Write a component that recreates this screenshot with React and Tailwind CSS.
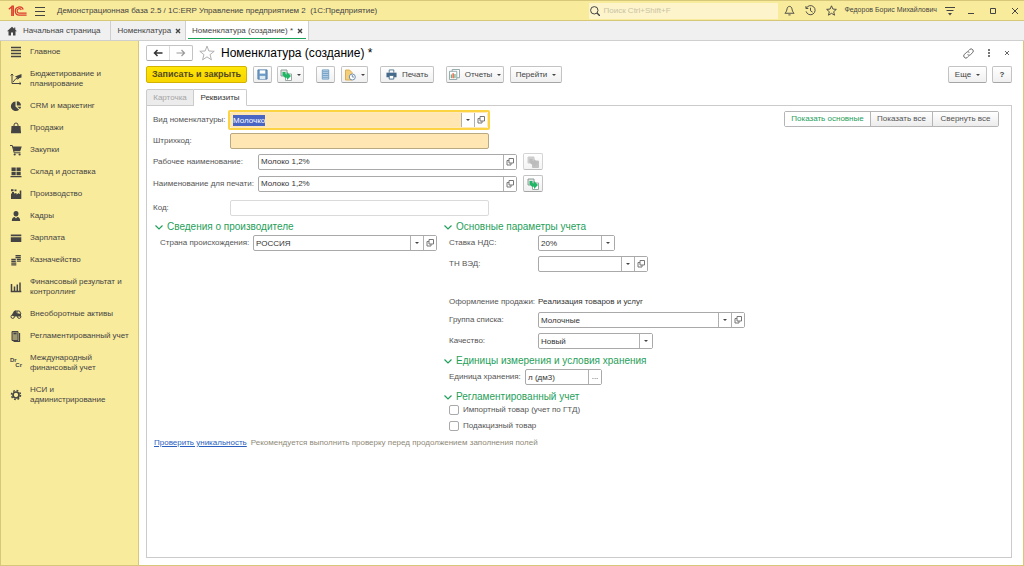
import React, { useEffect, useRef } from 'react';

const Svg = ({ className = 'w-3 h-3', children, box = '0 0 12 12' }) => (
  <svg viewBox={box} className={`shrink-0 ${className}`} fill="none" stroke="currentColor" strokeWidth="1" aria-hidden="true">
    {children}
  </svg>
);

const LogoIcon = () => (
  <Svg box="0 0 19 12" className="w-[19px] h-3 text-[#dc3a2c]">
    <path d="M.8 4.200 3.800 1.700V11M5.300 11V1.200H3.500" strokeWidth="1.300" />
    <path d="M15.200 4.600A4.100 4.100 0 1 0 11.200 10.200H18.600" strokeWidth="1.300" />
    <path d="M13.300 5A2.200 2.200 0 1 0 11.400 8.100H18.600" strokeWidth="1.200" />
  </Svg>
);

const Caret = () => (
  <svg viewBox="0 0 4 2" className="w-1 h-[2px] shrink-0" fill="#444" aria-hidden="true">
    <path d="M0 0h4L2 2z" />
  </svg>
);

const OpenIcon = () => (
  <Svg className="w-2 h-2 text-[#777]" box="0 0 8 8">
    <path d="M3 .5h4.500v4.500H3z" />
    <path d="M3 2.500H1v4.500H5V5" />
  </Svg>
);

const CopyIcon = ({ muted }) => (
  <Svg className="w-3 h-3">
    <path d="M1 1h6v6H1z" fill={muted ? '#b8b8b8' : '#dfe6e3'} stroke={muted ? '#b8b8b8' : '#8f9c98'} />
    <path d="M5.500 5h6v6.500h-6z" fill={muted ? '#a8a8a8' : '#fff'} stroke={muted ? '#a8a8a8' : '#9ba8a4'} />
    <path d="M2.500 3h3v2.300h1.500V3l4 4-4 4V8.700H5L2.500 6.200z" fill={muted ? '#a0a0a0' : '#1fb765'} stroke="none" />
  </Svg>
);

const menu = [
  {
    title: 'Главное',
    icon: <path d="M1 1.500h10M1 4.500h10M1 7.500h10M1 10.500h10" strokeWidth="1.400" />,
  },
  {
    title: 'Бюджетирование и планирование',
    icon: (
      <>
        <path d="M2 1v9.500h9M.7 2.500 2 1l1.300 1.500M9.500 9.200l1.500 1.300-1.500 1.300M3 9l3-3.500 2 .5 2-3" />
        <path d="M5 3.500 11.500 1v3.500L8 5.500z" fill="currentColor" stroke="none" />
      </>
    ),
  },
  {
    title: 'CRM и маркетинг',
    icon: (
      <>
        <path d="M5.500 1.500v5l3.600 3.200A4.800 4.800 0 1 1 5.500 1.500z" fill="currentColor" stroke="none" />
        <path d="M6.800 1.200a4.500 4.500 0 0 1 4.200 4.300H6.800zM7.200 6.700H11a4 4 0 0 1-1 2.300z" fill="currentColor" stroke="none" />
      </>
    ),
  },
  {
    title: 'Продажи',
    icon: (
      <>
        <path d="M1.500 4h9l.5 7.200H1z" fill="currentColor" stroke="none" />
        <path d="M4 5.500V3a2 2 0 0 1 4 0v2.500" />
      </>
    ),
  },
  {
    title: 'Закупки',
    icon: (
      <>
        <path d="M2.500 2.500h9.200L10.200 7.200H4z" fill="currentColor" stroke="none" />
        <path d="M0 1.500h2.300L4.200 8.800h6.300" />
        <circle cx="4.700" cy="10.500" r="1.100" fill="currentColor" stroke="none" />
        <circle cx="9.600" cy="10.500" r="1.100" fill="currentColor" stroke="none" />
      </>
    ),
  },
  {
    title: 'Склад и доставка',
    icon: <path d="M1.500 1.500h4.200v3.500H1.500zM6.500 1.500h4.200v3.500H6.500zM1.500 5.700h4.200v3.500H1.500zM6.500 5.700h4.200v3.500H6.500zM.5 10h11v1.200H.5z" fill="currentColor" stroke="none" />,
  },
  {
    title: 'Производство',
    icon: <path d="M1 11V5.500h1V4h2v1.500L6.500 5v1.500L9 5V6h.7V2.500h1.600V11zM1 1.200h2.500v2H1zM4.500 1.500h2v1.800h-2z" fill="currentColor" stroke="none" />,
  },
  {
    title: 'Кадры',
    icon: (
      <>
        <path d="M6 1a2.500 2.700 0 0 1 2.500 2.700C8.500 5.300 7.500 6.500 6 6.500S3.500 5.300 3.500 3.700A2.500 2.700 0 0 1 6 1z" fill="currentColor" stroke="none" />
        <path d="M1.800 11c0-2.700 1.200-3.700 2.900-4L6 8.500 7.300 7c1.700.3 2.900 1.300 2.900 4z" fill="currentColor" stroke="none" />
      </>
    ),
  },
  {
    title: 'Зарплата',
    icon: <path d="M.8 2.500h10.500v1.700H.8zM.8 5.200h10.500v4.800H.8z" fill="currentColor" stroke="none" />,
  },
  {
    title: 'Казначейство',
    icon: <path d="M5.500 1.700h5.300M5.500 3.500h5.300M6.800 5.300h4M6.800 7.100h4M1.300 5.500h4.500M1.300 7.300h4.500M1.300 9.100h5M1.300 10.900h5" strokeWidth="1.300" />,
  },
  {
    title: 'Финансовый результат и контроллинг',
    icon: <path d="M1.500 3v7.500M4.500 5.500v5M7.300 3.500v7M10 1.500v9M.7 10.500h10.600" strokeWidth="1.500" />,
  },
  {
    title: 'Внеоборотные активы',
    icon: (
      <>
        <path d="M1.500 7.500 4 3l2.500-1v3L11 6v2.500H5z" fill="currentColor" stroke="none" />
        <circle cx="2.700" cy="8.700" r="1.700" />
        <circle cx="9.200" cy="8.700" r="1.700" />
        <path d="M7 5V3h2.500l1.500 3" />
      </>
    ),
  },
  {
    title: 'Регламентированный учет',
    icon: (
      <>
        <path d="M2 1.500h6v9H2z" fill="currentColor" fillOpacity=".5" />
        <path d="M3.500 3.500h3M9.500 3v8.500H3.500" strokeWidth="1.300" />
      </>
    ),
  },
  { title: 'Международный финансовый учет', drcr: true },
  {
    title: 'НСИ и\nадминистрирование',
    icon: (
      <>
        <circle cx="6" cy="6" r="3" strokeWidth="1.700" />
        <circle cx="6" cy="6" r="4.500" strokeWidth="1.500" strokeDasharray="1.770 1.770" />
      </>
    ),
  },
];

const TitleBar = () => (
  <header className="flex h-[21px] shrink-0 items-center border-y border-[#d6c878] bg-[#f9eb9c] pl-2 pr-[5px] text-[#444]">
    <LogoIcon />
    <button aria-label="Меню" className="ml-2">
      <Svg box="0 0 10 10" className="w-[10px] h-[10px]">
        <path d="M0 1.500h10M0 5.500h10M0 9.500h10" />
      </Svg>
    </button>
    <h1 className="ml-3 whitespace-nowrap text-[8px]">
      Демонстрационная база 2.5 / 1С:ERP Управление предприятием 2&nbsp; (1С:Предприятие)
    </h1>
    <label className="ml-auto flex h-4 w-[189px] items-center gap-[3px] bg-[#fdf4cb] pl-px">
      <Svg box="0 0 10 10" className="w-[10px] h-[10px]">
        <circle cx="4.300" cy="4.300" r="3.700" />
        <path d="m7 7 3 3" strokeWidth="1.400" />
      </Svg>
      <input aria-label="Поиск" placeholder="Поиск Ctrl+Shift+F" className="min-w-0 flex-1 text-[8px] outline-none placeholder:text-[#c9c3a4]" />
    </label>
    <div className="ml-[6px] flex items-center gap-[10px]">
      <button aria-label="Уведомления">
        <Svg className="w-[11px] h-[11px]">
          <path d="M1 9h10C9.300 7.500 9 6 8.700 4.200 8.400 2.500 7.300 1.500 6 1.500S3.600 2.500 3.300 4.200C3 6 2.700 7.500 1 9zM4.800 10.800h2.400" />
        </Svg>
      </button>
      <button aria-label="История">
        <Svg className="w-[11px] h-[11px]">
          <path d="M1.500 3.500A5 5 0 1 1 1.200 7M1 1.200v2.600h2.600M6 3v3.300l2.300 1.500" />
        </Svg>
      </button>
      <button aria-label="Избранное">
        <Svg className="w-[11px] h-[11px]">
          <path d="m6 .9 1.500 3.500 3.800.4-2.900 2.500.9 3.800L6 9.100l-3.300 2 .9-3.800L.7 4.800l3.800-.4z" />
        </Svg>
      </button>
    </div>
    <span className="ml-[7px] whitespace-nowrap text-[7px] font-medium">Федоров Борис Михайлович</span>
    <button aria-label="Настройки" className="ml-2">
      <Svg box="0 0 10 10" className="w-[10px] h-[10px]">
        <path d="M0 1.500h10M1.500 4.500h7" />
        <path d="M3 7h4L5 9.500z" fill="currentColor" stroke="none" />
      </Svg>
    </button>
    <div className="ml-3 flex items-center gap-[14px]">
      <button aria-label="Свернуть">
        <Svg box="0 0 8 8" className="w-2 h-2"><path d="M1 6.500h6" /></Svg>
      </button>
      <button aria-label="Развернуть">
        <Svg box="0 0 8 8" className="w-2 h-2"><path d="M1.500 1.500h5v5h-5z" /></Svg>
      </button>
      <button aria-label="Закрыть">
        <Svg box="0 0 8 8" className="w-2 h-2"><path d="m1 1 6 6M7 1 1 7" /></Svg>
      </button>
    </div>
  </header>
);

const CloseMark = () => (
  <Svg box="0 0 6 6" className="w-[6px] h-[6px]">
    <path d="m1 1 4 4M5 1 1 5" strokeWidth="1.400" />
  </Svg>
);

const WindowTabs = () => (
  <nav className="flex h-5 shrink-0 border-b border-[#cfcfcf] bg-[#f0f0f0] text-[8px] text-[#444]">
    <button className="flex items-center gap-[6px] border-r border-[#cfcfcf] pl-[7px] pr-[10px]">
      <Svg box="0 0 10 10" className="w-[10px] h-[10px]">
        <path d="M5 .8 0 5.300h1.500V9.500h2.500V6.500h2v3h2.500V5.300H10L8.300 3.700V1.500H7.200v1.200z" fill="currentColor" stroke="none" />
      </Svg>
      Начальная страница
    </button>
    <button className="flex items-center gap-1 border-r border-[#cfcfcf] pl-[6px] pr-1">
      Номенклатура <CloseMark />
    </button>
    <button className="flex border-r border-[#cfcfcf] bg-white px-[2px]">
      <span className="flex h-[18px] items-center gap-1 border-b border-[#1aa158] pl-1 pr-[3px] pt-[2px]">
        Номенклатура (создание) * <CloseMark />
      </span>
    </button>
  </nav>
);

const Sidebar = () => (
  <aside className="w-[139px] shrink-0 border-x border-[#d6c878] bg-[#f9eb9c]">
    <ul>
      {menu.map((item) => (
        <li key={item.title}>
          <a href="#" className="flex items-center gap-2 py-[6px] pl-[9px] text-[8px] leading-[10px] text-[#444]">
            {item.drcr ? (
              <span className="flex h-[10px] w-3 shrink-0 flex-col justify-center text-[6px] font-bold leading-[5px]">
                <span>Dr</span>
                <span className="text-right">Cr</span>
              </span>
            ) : (
              <Svg className="-my-px w-3 h-3">{item.icon}</Svg>
            )}
            <span className="w-[104px] whitespace-pre-line">{item.title}</span>
          </a>
        </li>
      ))}
    </ul>
  </aside>
);

const ToolButton = ({ label, disabled, className = '', children }) => (
  <button
    aria-label={label}
    disabled={disabled}
    className={`flex h-[17px] items-center justify-center gap-[5px] whitespace-nowrap rounded-[2px] border border-[#c3c3c3] border-b-[#a5a5a5] bg-gradient-to-b from-white to-[#f0f0f0] text-[8px] text-[#444] ${className}`}
  >
    {children}
  </button>
);

const Toolbar = () => (
  <div className="flex items-center">
    <button className="h-[17px] w-[101px] whitespace-nowrap rounded-[2px] border border-[#d1b300] bg-gradient-to-b from-[#ffe608] to-[#f8d500] text-[9px] font-bold text-[#54491c]">
      Записать и закрыть
    </button>
    <ToolButton label="Записать" className="ml-[6px] w-[19px]">
      <Svg className="w-[11px] h-[11px] text-[#4f7ca8]">
        <path d="M1 1h10v10H1z" fill="#6d9cc8" />
        <path d="M3 1.500h6v3.500H3z" fill="#fff" stroke="none" />
        <path d="M3 7.500h6V11H3z" fill="#dce8f2" stroke="none" />
      </Svg>
    </ToolButton>
    <ToolButton label="Создать на основании" className="ml-[5px] w-[27px]">
      <CopyIcon />
      <Caret />
    </ToolButton>
    <ToolButton label="Список" className="ml-3 w-[19px]">
      <Svg className="w-[11px] h-[11px] text-[#6a9ac2]">
        <path d="M2.500 1h7v10h-7z" fill="#c4daec" />
        <path d="M3 3h6M3 5h6M3 7h6M3 9h6" />
      </Svg>
    </ToolButton>
    <ToolButton label="Отложить" className="ml-[6px] w-[27px]">
      <Svg>
        <path d="M1.500 1h4L8 3.500V11H1.500z" fill="#f3cd78" stroke="#dcae52" />
        <circle cx="8.300" cy="8" r="3" fill="#fff" stroke="#7191b0" />
        <path d="M8.300 6v2H10" stroke="#7191b0" />
      </Svg>
      <Caret />
    </ToolButton>
    <ToolButton className="ml-3 w-[54px]">
      <Svg className="w-[11px] h-[11px]">
        <path d="M3.500 4V1h5v3" stroke="#55758f" />
        <path d="M.5 4h11v5h-11z" fill="#45698a" stroke="none" />
        <path d="M3.500 7h5v4h-5z" fill="#fff" stroke="#45698a" />
      </Svg>
      Печать
    </ToolButton>
    <ToolButton className="ml-3 w-[58px]">
      <Svg className="w-[11px] h-[11px]">
        <path d="M3.500 .5h8v9h-8z" fill="#fff" stroke="#8aa1a5" />
        <path d="M.5 2.500h8v9h-8z" fill="#fff" stroke="#8aa1a5" />
        <path d="M2.500 10V6" stroke="#3c8f5b" />
        <path d="M4.500 10V4.500" stroke="#e05a3a" strokeWidth="1.500" />
        <path d="M6.500 10V5.500" stroke="#3c8f5b" />
      </Svg>
      Отчеты
      <Caret />
    </ToolButton>
    <ToolButton className="ml-[6px] w-[52px]">
      Перейти
      <Caret />
    </ToolButton>
    <ToolButton className="ml-auto w-[39px]">
      Еще
      <Caret />
    </ToolButton>
    <ToolButton className="ml-[5px] w-5 font-bold">?</ToolButton>
  </div>
);

const cell = 'flex w-[13px] shrink-0 items-center justify-center border-l border-[#b0b0b0] bg-white';

// Text box with the optional list / open / dots buttons glued to its right side
const Field = ({ id, value = '', options, width, list, open, dots, tone = 'border-[#a9a9a9] bg-white', inputRef }) => (
  <div className={`flex h-4 rounded-[2px] border ${tone} ${width}`}>
    {options ? (
      <select id={id} defaultValue={value} className="min-w-0 flex-1 appearance-none pl-[2px] text-[8px] leading-[11px] text-[#333] outline-none">
        {options.map((o) => <option key={o}>{o}</option>)}
      </select>
    ) : (
      <input
        id={id}
        ref={inputRef}
        defaultValue={value}
        className="min-w-0 flex-1 pl-[2px] text-[8px] leading-[11px] text-[#333] caret-transparent outline-none selection:bg-[#4a66c4] selection:text-white"
      />
    )}
    {options && <span className={cell}><Caret /></span>}
    {list && <button aria-label="Выбрать из списка" className={cell}><Caret /></button>}
    {open && <button aria-label="Открыть" className={cell}><OpenIcon /></button>}
    {dots && <button aria-label="Выбрать" className={`${cell} text-[8px] text-[#444]`}>...</button>}
  </div>
);

const Row = ({ id, label, labelWidth, className = '', children }) => (
  <div className={`flex items-center ${className}`}>
    <label htmlFor={id} className={`shrink-0 whitespace-nowrap text-[8px] text-[#555] ${labelWidth}`}>{label}</label>
    {children}
  </div>
);

const GroupTitle = ({ className = '', children }) => (
  <h3 className={`flex h-[14px] items-center gap-1 whitespace-nowrap text-[10px] leading-[14px] text-[#1fa05a] ${className}`}>
    <Svg box="0 0 8 8" className="w-2 h-2"><path d="m.5 2.500 3.500 3.500 3.500-3.500" strokeWidth="1.200" /></Svg>
    {children}
  </h3>
);

const CheckRow = ({ children, className = '' }) => (
  <label className={`flex items-center gap-1 text-[8px] leading-[10px] text-[#555] ${className}`}>
    <input type="checkbox" className="h-[10px] w-[10px] appearance-none rounded-[2px] border border-[#a9a9a9] bg-white" />
    {children}
  </label>
);

const ItemForm = () => {
  const kindRef = useRef(null);

  useEffect(() => {
    kindRef.current.focus();
    kindRef.current.select();
  }, []);

  return (
    <section className="flex-1 border border-[#cbcbcb] px-[6px] pt-1">
      <div className="flex items-start justify-between">
        <Row id="kind" label="Вид номенклатуры:" labelWidth="w-[75px]">
          <div className="rounded-[2px] border-2 border-[#fbd343]">
            <Field id="kind" value="Молочко" width="w-[258px]" list open inputRef={kindRef} tone="border-[#ffe9b8] bg-[#ffe6b3]" />
          </div>
        </Row>
        <div className="mr-[6px] mt-px flex h-4 rounded-[2px] border border-[#b5b5b5] text-[8px] text-[#555]">
          <button className="w-[85px] bg-white text-[#1fa05a]">Показать основные</button>
          <button className="w-[62px] border-l border-[#b5b5b5] bg-gradient-to-b from-white to-[#ececec]">Показать все</button>
          <button className="w-[66px] border-l border-[#b5b5b5] bg-gradient-to-b from-white to-[#ececec]">Свернуть все</button>
        </div>
      </div>
      <Row id="barcode" label="Штрихкод:" labelWidth="w-[77px]" className="mt-[3px]">
        <Field id="barcode" width="w-[259px]" tone="border-[#b9a983] bg-[#ffe6b3]" />
      </Row>
      <Row id="workName" label="Рабочее наименование:" labelWidth="w-[105px]" className="mt-1">
        <Field id="workName" value="Молоко 1,2%" width="w-[259px]" open />
        <ToolButton label="Скопировать" disabled className="ml-[6px] w-5 opacity-70"><CopyIcon muted /></ToolButton>
      </Row>
      <Row id="printName" label="Наименование для печати:" labelWidth="w-[105px]" className="mt-[5px]">
        <Field id="printName" value="Молоко 1,2%" width="w-[259px]" open />
        <ToolButton label="Заполнить" className="ml-[6px] w-5"><CopyIcon /></ToolButton>
      </Row>
      <Row id="code" label="Код:" labelWidth="w-[77px]" className="mt-2">
        <Field id="code" width="w-[259px]" tone="border-[#dadada] bg-white" />
      </Row>

      <div className="mt-1 grid grid-cols-[289px_1fr]">
        <div>
          <GroupTitle className="pl-[2px]">Сведения о производителе</GroupTitle>
          <Row id="country" label="Страна происхождения:" labelWidth="w-[93px]" className="mt-px pl-[7px]">
            <Field id="country" value="РОССИЯ" width="w-[184px]" list open />
          </Row>
        </div>
        <div>
          <GroupTitle className="pl-[2px]">Основные параметры учета</GroupTitle>
          <div className="pl-[7px]">
            <Row id="vat" label="Ставка НДС:" labelWidth="w-[89px]" className="mt-px">
              <Field id="vat" value="20%" options={['20%', '10%', 'Без НДС']} width="w-[77px]" />
            </Row>
            <Row id="tnved" label="ТН ВЭД:" labelWidth="w-[89px]" className="mt-[5px]">
              <Field id="tnved" width="w-[110px]" list open />
            </Row>
            <div className="mt-6 flex h-3 items-center text-[8px]">
              <span className="w-[89px] whitespace-nowrap text-[#555]">Оформление продажи:</span>
              <span className="text-[#333]">Реализация товаров и услуг</span>
            </div>
            <Row id="group" label="Группа списка:" labelWidth="w-[89px]" className="mt-1">
              <Field id="group" value="Молочные" width="w-[207px]" list open />
            </Row>
            <Row id="quality" label="Качество:" labelWidth="w-[89px]" className="mt-[5px]">
              <Field id="quality" value="Новый" options={['Новый', 'Ограниченно годен']} width="w-[115px]" />
            </Row>
          </div>
          <GroupTitle className="mt-[5px] pl-[2px]">Единицы измерения и условия хранения</GroupTitle>
          <Row id="unit" label="Единица хранения:" labelWidth="w-[76px]" className="mt-px pl-[7px]">
            <Field id="unit" value="л (дм3)" width="w-[77px]" dots />
          </Row>
          <GroupTitle className="mt-[5px] pl-[2px]">Регламентированный учет</GroupTitle>
          <CheckRow className="mt-px pl-[7px]">Импортный товар (учет по ГТД)</CheckRow>
          <CheckRow className="mt-[6px] pl-[7px]">Подакцизный товар</CheckRow>
        </div>
      </div>

      <p className="mt-[6px] flex gap-1 pl-px text-[8px] leading-3">
        <a href="#" className="text-[#2a5fc0] underline">Проверить уникальность</a>
        <span className="text-[#8f8a78]">Рекомендуется выполнить проверку перед продолжением заполнения полей</span>
      </p>
    </section>
  );
};

const App = () => {
  return (
    <div className="flex min-h-screen flex-col bg-white font-['Liberation_Sans',Arial,sans-serif]">
      <TitleBar />
      <WindowTabs />
      <div className="flex flex-1 border-b border-[#d6c878]">
        <Sidebar />
        <main className="flex min-w-0 flex-1 flex-col border-r border-[#d6c878] pb-[7px] pl-[7px] pr-[11px] pt-1">
          <div className="flex h-4 items-center">
            <div className="flex h-4 w-[47px] rounded-[2px] border border-[#c3c3c3] border-b-[#a5a5a5] text-[#333]">
              <button aria-label="Назад" className="flex flex-1 items-center justify-center border-r border-[#dcdcdc]">
                <Svg box="0 0 10 8" className="w-[10px] h-2"><path d="M9.500 4H2M4.500 1 1.500 4l3 3" strokeWidth="1.500" /></Svg>
              </button>
              <button aria-label="Вперед" className="flex flex-1 items-center justify-center text-[#999]">
                <Svg box="0 0 10 8" className="w-[10px] h-2"><path d="M.5 4H8M5.500 1l3 3-3 3" strokeWidth="1.200" /></Svg>
              </button>
            </div>
            <button aria-label="В избранное" className="ml-[6px] text-[#aaa]">
              <Svg className="w-4 h-4"><path d="m6 .8 1.400 3.700 4 .2-3.100 2.500 1 3.900L6 8.900l-3.300 2.200 1-3.900L.6 4.700l4-.2z" strokeWidth=".7" /></Svg>
            </button>
            <h2 className="ml-[6px] whitespace-nowrap text-[12px] leading-4 text-black">Номенклатура (создание) *</h2>
            <div className="ml-auto flex items-center gap-[11px] text-[#555]">
              <button aria-label="Ссылка">
                <Svg className="w-[11px] h-[11px]">
                  <path d="M5 7.200a2.300 2.300 0 0 0 3.300 0l2.200-2.200a2.300 2.300 0 0 0-3.300-3.300L6 2.900M7 4.800a2.300 2.300 0 0 0-3.300 0L1.500 7a2.300 2.300 0 0 0 3.300 3.300L6 9.100" />
                </Svg>
              </button>
              <button aria-label="Еще действия">
                <Svg box="0 0 8 8" className="w-2 h-2"><path d="M4 0v2M4 3v2M4 6v2" strokeWidth="1.600" /></Svg>
              </button>
              <button aria-label="Закрыть форму" className="mr-[2px]">
                <Svg box="0 0 6 6" className="w-[6px] h-[6px]"><path d="m1 1 4 4M5 1 1 5" strokeWidth=".9" /></Svg>
              </button>
            </div>
          </div>
          <div className="mt-[5px]">
            <Toolbar />
          </div>
          <div className="relative z-10 -mb-px mt-[6px] flex text-[8px]">
            <button className="h-[17px] w-12 rounded-tl-[2px] border border-[#cbcbcb] bg-[#ececec] text-[#a5a5a5]">Карточка</button>
            <button className="h-[17px] w-[53px] rounded-tr-[2px] border border-l-0 border-[#cbcbcb] border-b-white bg-white text-[#333]">Реквизиты</button>
          </div>
          <ItemForm />
        </main>
      </div>
    </div>
  );
};

export default App;
